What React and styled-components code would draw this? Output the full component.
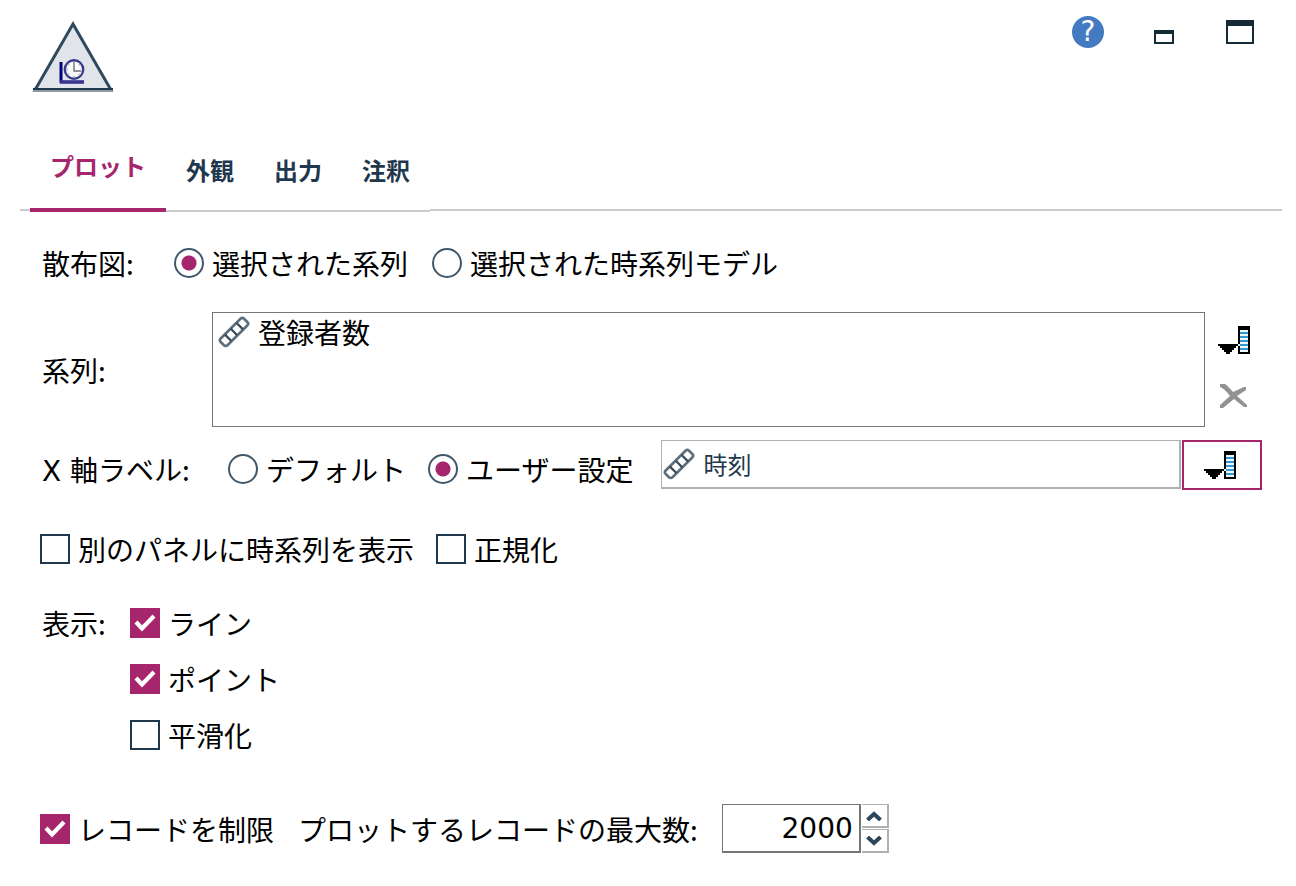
import React, { useState } from "react";
import styled, { createGlobalStyle, css } from "styled-components";

const accent = "#a6266e";
const ink = "#1f384d";

const GlobalStyle = createGlobalStyle`
  *, *::before, *::after { box-sizing: border-box; }
  body {
    margin: 0;
    background: #fff;
    color: #000;
    font-family: "Noto Sans CJK JP", sans-serif;
    font-size: 28px;
    line-height: 42px;
  }
  button, input { font: inherit; color: inherit; margin: 0; padding: 0; }
  svg { display: block; }
`;

const Dialog = styled.main`
  padding: 16px 14px 20px 20px;
`;

const Header = styled.header`
  display: flex;
  justify-content: space-between;
  align-items: flex-start;
  height: 124px;
  padding: 0 28px 0 12px;
`;

const NodeIcon = styled.svg`
  margin-top: 4px;
`;

const WindowControls = styled.div`
  display: flex;
  align-items: center;
  height: 32px;
`;

const PlainButton = styled.button`
  display: flex;
  border: 0;
  background: none;
`;

const HelpButton = styled(PlainButton)`
  align-items: center;
  justify-content: center;
  width: 32px;
  height: 32px;
  margin-right: 50px;
  border-radius: 50%;
  background: #437ac2;
  color: #fff;
  font-family: "DejaVu Sans", sans-serif;
  font-size: 28px;
  line-height: 32px;
`;

const WindowButton = styled(PlainButton)`
  width: ${(p) => p.$width}px;
  height: ${(p) => p.$height}px;
  margin-top: ${(p) => p.$drop || 0}px;
  margin-right: ${(p) => p.$gap || 0}px;
  border: 2px solid #142a35;
  border-top-width: ${(p) => p.$bar}px;
`;

const TabBar = styled.div`
  display: flex;
  height: 72px;
  padding-left: 10px;
  background: linear-gradient(#ccc, #ccc) 0 69px / 100% 2px no-repeat;
`;

const Tab = styled.button`
  height: 72px;
  padding: 0 20px 10px;
  border: 0;
  border-bottom: 2px solid #ccc;
  background: #fff;
  color: ${ink};
  font-size: 24px;
  font-weight: 700;
  line-height: 36px;
  ${(p) =>
    p.$active &&
    css`
      border-bottom: 4px solid ${accent};
      color: ${accent};
      padding-bottom: 16px;
    `}
`;

const Form = styled.form`
  padding: 30px 20px 0;
`;

const Row = styled.div`
  display: flex;
  align-items: ${(p) => p.$align || "center"};
  margin-bottom: ${(p) => p.$after || 0}px;
`;

const Caption = styled.span`
  flex: none;
  width: ${(p) => p.$width}px;
  padding-left: 2px;
  white-space: nowrap;
`;

const Latin = styled.span`
  font-family: "DejaVu Sans", sans-serif;
  line-height: 1;
`;

const Choice = styled.label`
  display: flex;
  align-items: center;
  gap: 8px;
  margin-right: ${(p) => p.$gap || 0}px;
  white-space: nowrap;
`;

const RadioInput = styled.input.attrs({ type: "radio" })`
  appearance: none;
  flex: none;
  width: 30px;
  height: 30px;
  border: 2px solid #40576a;
  border-radius: 50%;
  background: #fff;
  &:checked {
    background: radial-gradient(circle, ${accent} 7px, #fff 8px);
  }
`;

const CheckInput = styled.input.attrs({ type: "checkbox" })`
  appearance: none;
  grid-area: 1 / 1;
  width: 30px;
  height: 30px;
  border: 2px solid ${ink};
  background: #fff;
  &:checked {
    border-color: ${accent};
    background: ${accent};
  }
  & + svg { display: none; }
  &:checked + svg { display: block; }
`;

const CheckFrame = styled.span`
  display: grid;
  flex: none;
  width: 30px;
  height: 30px;
  svg {
    grid-area: 1 / 1;
    pointer-events: none;
  }
`;

const CheckStack = styled.div`
  display: grid;
  gap: 14px;
`;

const SeriesList = styled.ul`
  flex: 1;
  height: 115px;
  margin: 0;
  padding: 0;
  list-style: none;
  border: 1px solid #767676;
`;

const SeriesItem = styled.li`
  display: flex;
  align-items: center;
  gap: 8px;
  padding-left: 5px;
  line-height: 38px;
`;

const SideActions = styled.div`
  display: flex;
  flex-direction: column;
  gap: 29px;
  width: 57px;
  padding: 0 0 4px 13px;
`;

const FieldBox = styled.label`
  display: flex;
  flex: 1;
  align-items: center;
  align-self: flex-start;
  gap: 8px;
  height: 49px;
  padding-left: 1px;
  border: 1px solid #b0b0b0;
  border-width: 1px 2px 2px 1px;
  color: ${ink};
`;

const FieldInput = styled.input`
  flex: 1;
  min-width: 0;
  height: 40px;
  border: 0;
  outline: 0;
  background: none;
  font-size: 24px;
`;

const PickerButton = styled(PlainButton)`
  align-items: center;
  justify-content: center;
  width: 80px;
  height: 50px;
  margin-left: 1px;
  padding-right: 4px;
  border: 2px solid ${accent};
`;

const NumberInput = styled.input`
  width: 139px;
  height: 49px;
  padding-right: 6px;
  border: 1px solid #767676;
  border-width: 1px 2px 2px 1px;
  background: #fff;
  font-family: "DejaVu Sans", sans-serif;
  text-align: right;
`;

const Stepper = styled.div`
  display: grid;
  gap: 1px;
  margin-left: 1px;
`;

const StepButton = styled(PlainButton)`
  align-items: center;
  justify-content: center;
  width: 27px;
  height: 24px;
  border: solid #b0b0b0;
  border-width: 1px 2px 2px 0;
`;

function TimePlotIcon() {
  return (
    <NodeIcon width="82" height="74" viewBox="0 0 82 74" aria-hidden="true">
      <path d="M41 4 L79 70 H3 Z" fill="#e1e5e9" stroke="#2f4a5e" strokeWidth="3" />
      <path d="M1 69 H81" stroke="#1f384d" strokeWidth="2" />
      <path d="M1 71 H81" stroke="#8b99a5" strokeWidth="2" />
      <path d="M29 42 V63" stroke="#00007a" strokeWidth="3" />
      <path d="M28 62 H52" stroke="#35358f" strokeWidth="3.6" />
      <circle cx="42" cy="49.5" r="9.2" fill="#fafafa" stroke="#38388f" strokeWidth="2.4" />
      <path d="M42 42 V51 H49" fill="none" stroke="#70707a" strokeWidth="1.4" />
      <path d="M36 44 L37 45 M48 44 L47 45 M36 55 L37 54 M48 55 L47 54 M34.5 49.5 H36 M42 56 V58" stroke="#b5b5bd" strokeWidth="2" />
    </NodeIcon>
  );
}

function ContinuousIcon() {
  return (
    <svg width="32" height="32" viewBox="0 0 32 32" aria-hidden="true">
      <g transform="rotate(-45 16 16)" fill="none" stroke="#34495a">
        <rect x="-0.5" y="11.2" width="33" height="9.6" rx="2.5" stroke="#5d6f7d" strokeWidth="2.6" />
        <path d="M7.8 11.500 V20.500 M16 11.500 V20.500 M24.200 11.500 V20.500" strokeWidth="2.2" />
      </g>
    </svg>
  );
}

function PickerIcon() {
  return (
    <svg width="32" height="28" viewBox="0 0 32 28" shapeRendering="crispEdges" aria-hidden="true">
      <path d="M20 0h12v28h-12z" fill="#000" />
      <path d="M22 4h8v22h-8z M20 18h2v2h-2z" fill="#eef7fc" />
      <path d="M22 6h8v2h-8z M22 10h8v2h-8z M22 14h8v2h-8z M22 18h8v2h-8z M22 22h8v2h-8z" fill="#3197d1" />
      <path d="M0 18h20v2h-2v2h-2v2h-2v2h-2v2h-4v-2h-2v-2h-2v-2h-2v-2h-2z" fill="#000" />
    </svg>
  );
}

function RemoveIcon() {
  return (
    <svg width="32" height="26" viewBox="0 0 32 26" aria-hidden="true">
      <path d="M2 1 H7 Q10 3 15 9 L26 4 L28 4 V7 L19 13 L29 22 V24 H26 L16 16 L5 25 H2 V22 L12 13 Q7 6 2 4 Z" fill="#929292" />
    </svg>
  );
}

function Tick() {
  return (
    <svg width="30" height="30" viewBox="0 0 30 30" aria-hidden="true">
      <path d="M6 14 L12 20.500 L24 8" fill="none" stroke="#fff" strokeWidth="4.2" />
    </svg>
  );
}

function Chevron({ down }) {
  return (
    <svg width="16" height="10" viewBox="0 0 16 10" aria-hidden="true">
      <path d={down ? "M1.500 1 L8 7 L14.500 1" : "M1.500 9 L8 3 L14.500 9"} fill="none" stroke="#2c475b" strokeWidth="4" />
    </svg>
  );
}

function Radio({ label, gap, ...rest }) {
  return (
    <Choice $gap={gap}>
      <RadioInput {...rest} />
      {label}
    </Choice>
  );
}

function Check({ label, gap, checked }) {
  return (
    <Choice $gap={gap}>
      <CheckFrame>
        <CheckInput defaultChecked={checked} />
        <Tick />
      </CheckFrame>
      {label}
    </Choice>
  );
}

const tabs = ["プロット", "外観", "出力", "注釈"];

export default function App() {
  const [tab, setTab] = useState(0);
  const [limit, setLimit] = useState(2000);

  return (
    <>
      <GlobalStyle />
      <Dialog>
        <Header>
          <TimePlotIcon />
          <WindowControls>
            <HelpButton type="button">?</HelpButton>
            <WindowButton type="button" aria-label="最小化" $width={20} $height={14} $bar={4} $drop={10} $gap={52} />
            <WindowButton type="button" aria-label="最大化" $width={28} $height={24} $bar={6} />
          </WindowControls>
        </Header>

        <TabBar role="tablist">
          {tabs.map((name, i) => (
            <Tab key={name} type="button" role="tab" aria-selected={tab === i} $active={tab === i} onClick={() => setTab(i)}>
              {name}
            </Tab>
          ))}
        </TabBar>

        <Form onSubmit={(e) => e.preventDefault()}>
          <Row $after={28} role="radiogroup" aria-labelledby="plot-caption">
            <Caption id="plot-caption" $width={134}>散布図:</Caption>
            <Radio name="plot" label="選択された系列" gap={24} defaultChecked />
            <Radio name="plot" label="選択された時系列モデル" />
          </Row>

          <Row $after={13}>
            <Caption id="series-caption" $width={172}>系列:</Caption>
            <SeriesList aria-labelledby="series-caption">
              <SeriesItem>
                <ContinuousIcon />
                登録者数
              </SeriesItem>
            </SeriesList>
            <SideActions>
              <PlainButton type="button" aria-label="フィールドを選択"><PickerIcon /></PlainButton>
              <PlainButton type="button" aria-label="削除"><RemoveIcon /></PlainButton>
            </SideActions>
          </Row>

          <Row $after={38} $align="flex-end" role="radiogroup" aria-labelledby="axis-caption">
            <Caption id="axis-caption" $width={188}><Latin>X </Latin>軸ラベル:</Caption>
            <Radio name="axis" label="デフォルト" gap={22} />
            <Radio name="axis" label="ユーザー設定" gap={28} defaultChecked />
            <FieldBox>
              <ContinuousIcon />
              <FieldInput aria-label="X 軸ラベル" defaultValue="時刻" />
            </FieldBox>
            <PickerButton type="button" aria-label="フィールドを選択"><PickerIcon /></PickerButton>
          </Row>

          <Row $after={32}>
            <Check label="別のパネルに時系列を表示" gap={22} />
            <Check label="正規化" />
          </Row>

          <Row $after={48} $align="flex-start" role="group" aria-labelledby="display-caption">
            <Caption id="display-caption" $width={90}>表示:</Caption>
            <CheckStack>
              <Check label="ライン" checked />
              <Check label="ポイント" checked />
              <Check label="平滑化" />
            </CheckStack>
          </Row>

          <Row>
            <Check label="レコードを制限" gap={24} checked />
            <Choice htmlFor="record-limit" $gap={24}>プロットするレコードの最大数:</Choice>
            <NumberInput id="record-limit" inputMode="numeric" value={limit} onChange={(e) => setLimit(Number(e.target.value) || 0)} />
            <Stepper>
              <StepButton type="button" aria-label="増やす" onClick={() => setLimit(limit + 1)}><Chevron /></StepButton>
              <StepButton type="button" aria-label="減らす" onClick={() => setLimit(Math.max(0, limit - 1))}><Chevron down /></StepButton>
            </Stepper>
          </Row>
        </Form>
      </Dialog>
    </>
  );
}
